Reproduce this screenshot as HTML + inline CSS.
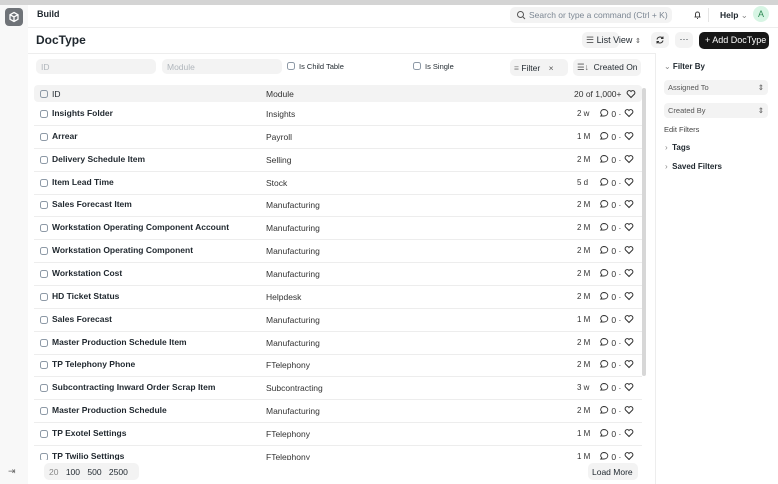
<!DOCTYPE html><html><head><style>
*{box-sizing:border-box;margin:0;padding:0}
body{width:778px;height:484px;overflow:hidden;font-family:"Liberation Sans",sans-serif;background:#f8f8f8;position:relative;color:#1f272e}
.a{position:absolute}
.top{left:0;top:0;width:778px;height:5px;background:#d4d4d4}
.main{left:28px;top:5px;width:750px;height:479px;background:#fff}
.t{font-size:9px;color:#1f272e}
.cb{width:8px;height:8px;border:1px solid #8d99a6;border-radius:2.5px;position:absolute}
.row{position:absolute;left:34px;width:608px;height:23px;border-bottom:1px solid #ededed;font-size:8.5px}
.row .n{position:absolute;left:18px;top:5px;font-weight:bold;color:#1f272e}
.row .m{position:absolute;left:232px;top:6px;color:#333}
.row .d{position:absolute;left:543px;top:6px;color:#333;font-size:8px}
.row .c{position:absolute;left:565px;top:5px;color:#333;font-size:8.5px}
.inp{background:#f3f3f3;border-radius:5px;height:15px;position:absolute;font-size:8.5px;color:#b0b6bc;padding:3px 5px}
</style></head><body>
<div class="a top"></div>
<div class="a main"></div>
<div class="a" style="left:5px;top:8px;width:18px;height:18px;background:#6f7378;border-radius:4px"><svg width="18" height="18" viewBox="0 0 18 18"><path d="M9 4.5l4 2.2v4.6L9 13.5 5 11.3V6.7z M5 6.7l4 2.2 4-2.2 M9 8.9v4.6" fill="none" stroke="#fff" stroke-width="1.3"/></svg></div>
<div class="a t" style="left:37px;top:9px;font-weight:bold">Build</div>
<div class="a" style="left:28px;top:27px;width:750px;border-top:1px solid #ededed"></div>
<div class="a" style="left:510px;top:7px;width:162px;height:16px;background:#f3f3f3;border-radius:5px;font-size:8.5px;color:#7c8793;padding:3px 0 0 19px">Search or type a command (Ctrl + K)</div>
<svg class="a" style="left:516px;top:10px" width="10" height="10"><circle cx="4.5" cy="4.5" r="3" fill="none" stroke="#555" stroke-width="1"/><path d="M7 7l2 2" stroke="#555"/></svg>
<svg class="a" style="left:692px;top:9px" width="11" height="11"><path d="M2.5 8h6M3.5 8V5a2 2 0 014 0v3M5 9.5h1" fill="none" stroke="#444" stroke-width="1"/></svg>
<div class="a" style="left:708px;top:8px;height:14px;border-left:1px solid #e5e5e5"></div>
<div class="a t" style="left:720px;top:10px;font-size:8.5px;font-weight:bold">Help <span style="font-weight:normal;color:#888">⌄</span></div>
<div class="a" style="left:753px;top:6px;width:16px;height:16px;border-radius:50%;background:#d7f5e4;color:#2f8a55;font-size:9px;text-align:center;line-height:16px">A</div>
<div class="a" style="left:36px;top:33px;font-size:12px;font-weight:bold">DocType</div>
<div class="a" style="left:582px;top:32px;width:37px;height:16px;background:#f3f3f3;border-radius:5px"></div>
<div class="a t" style="left:586px;top:35px"><span style="color:#555">☰</span> List View <span style="color:#555;font-size:7px">⇕</span></div>
<div class="a" style="left:651px;top:32px;width:18px;height:16px;background:#f3f3f3;border-radius:5px"><svg width="18" height="16"><path d="M12 6.5a3.3 3.3 0 00-6 1M6 9.5a3.3 3.3 0 006-1M12 4.5v2h-2M6 11.5v-2h2" fill="none" stroke="#333" stroke-width="1"/></svg></div>
<div class="a" style="left:675px;top:32px;width:18px;height:16px;background:#f3f3f3;border-radius:5px;text-align:center;font-size:9px;line-height:14px">···</div>
<div class="a" style="left:699px;top:32px;width:70px;height:17px;background:#171717;border-radius:5px;color:#fff;font-size:9px;padding:3px 0 0 6px">+ Add DocType</div>
<div class="a" style="left:28px;top:53px;width:627px;border-top:1px solid #ededed"></div>
<div class="a" style="left:655px;top:53px;width:1px;height:431px;background:#ededed"></div>
<div class="inp" style="left:36px;top:59px;width:120px">ID</div>
<div class="inp" style="left:162px;top:59px;width:120px">Module</div>
<div class="cb" style="left:287px;top:62px"></div><div class="a" style="left:299px;top:62px;font-size:7.5px">Is Child Table</div>
<div class="cb" style="left:413px;top:62px"></div><div class="a" style="left:425px;top:62px;font-size:7.5px">Is Single</div>
<div class="a" style="left:510px;top:59px;width:58px;height:17px;background:#f3f3f3;border-radius:5px;font-size:8.5px;padding:4px 0 0 4px"><span style="color:#888">≡</span> Filter <span style="margin-left:6px;color:#555">×</span></div>
<div class="a" style="left:573px;top:59px;width:68px;height:17px;background:#f3f3f3;border-radius:5px;font-size:8.5px;padding:3px 0 0 4px"><span style="color:#555">☰↓</span>&nbsp; Created On</div>
<div class="a" style="left:34px;top:85px;width:608px;height:17px;background:#f3f3f3;border-radius:4px"></div>
<div class="cb" style="left:40px;top:90px"></div>
<div class="a" style="left:52px;top:89px;font-size:8.5px">ID</div>
<div class="a" style="left:266px;top:89px;font-size:8.5px;color:#333">Module</div>
<div class="a" style="left:574px;top:89px;font-size:8.5px;color:#333">20 of 1,000+</div>
<svg class="a" style="left:626px;top:89px" width="10" height="10"><path d="M5 8.5L1.5 5A2 2 0 015 2.5 2 2 0 018.5 5z" fill="none" stroke="#333" stroke-width="1"/></svg>
<div class="a" style="left:642px;top:88px;width:4px;height:288px;background:#d7d7d7;border-radius:2px"></div>
<div id="rows"></div>
<div class="a" style="left:28px;top:460px;width:627px;height:24px;background:#fff"></div>
<div class="a" style="left:44px;top:463px;width:95px;height:17px;background:#f3f3f3;border-radius:5px;font-size:8.5px;padding:4px 0 0 5px;word-spacing:5px"><span style="color:#888">20</span> 100 500 2500</div>
<div class="a" style="left:588px;top:463px;width:50px;height:17px;background:#f3f3f3;border-radius:5px;font-size:8.5px;padding:4px 0 0 4px">Load More</div>
<div class="a" style="left:8px;top:466px;font-size:9px;color:#666">⇥</div>
<div class="a" style="left:664px;top:62px;font-size:8px;font-weight:bold"><span style="color:#888;font-weight:normal">⌄</span> Filter By</div>
<div class="a" style="left:664px;top:80px;width:104px;height:15px;background:#f3f3f3;border-radius:4px;font-size:7.5px;color:#555;padding:3px 4px">Assigned To<span style="float:right">⇕</span></div>
<div class="a" style="left:664px;top:103px;width:104px;height:15px;background:#f3f3f3;border-radius:4px;font-size:7.5px;color:#555;padding:3px 4px">Created By<span style="float:right">⇕</span></div>
<div class="a" style="left:664px;top:125px;font-size:7.5px;color:#444">Edit Filters</div>
<div class="a" style="left:665px;top:143px;font-size:8px;font-weight:bold"><span style="color:#888;font-weight:normal">›</span>&nbsp; Tags</div>
<div class="a" style="left:665px;top:162px;font-size:8px;font-weight:bold"><span style="color:#888;font-weight:normal">›</span>&nbsp; Saved Filters</div>
<script>
var d=[["Insights Folder","Insights","2 w"],["Arrear","Payroll","1 M"],["Delivery Schedule Item","Selling","2 M"],["Item Lead Time","Stock","5 d"],["Sales Forecast Item","Manufacturing","2 M"],["Workstation Operating Component Account","Manufacturing","2 M"],["Workstation Operating Component","Manufacturing","2 M"],["Workstation Cost","Manufacturing","2 M"],["HD Ticket Status","Helpdesk","2 M"],["Sales Forecast","Manufacturing","1 M"],["Master Production Schedule Item","Manufacturing","2 M"],["TP Telephony Phone","FTelephony","2 M"],["Subcontracting Inward Order Scrap Item","Subcontracting","3 w"],["Master Production Schedule","Manufacturing","2 M"],["TP Exotel Settings","FTelephony","1 M"],["TP Twilio Settings","FTelephony","1 M"]];
var ic='<svg width="10" height="10" style="vertical-align:-1px"><path d="M5 1.5a3.5 3 0 110 6.5H1.8l1-1.3A3.3 3 0 015 1.5z" fill="none" stroke="#333" stroke-width="0.9"/></svg>';
var hr='<svg width="10" height="10" style="vertical-align:-1px"><path d="M5 8.5L1.5 5A2 2 0 015 2.5 2 2 0 018.5 5z" fill="none" stroke="#333" stroke-width="1"/></svg>';
var h="";d.forEach(function(r,i){var y=103+i*22.85;h+='<div class="row" style="top:'+y+'px"><div class="cb" style="left:6px;top:7px"></div><div class="n">'+r[0]+'</div><div class="m">'+r[1]+'</div><div class="d">'+r[2]+'</div><div class="c">'+ic+' 0 · '+hr+'</div></div>';});
document.getElementById("rows").innerHTML=h;
</script>
</body></html>
